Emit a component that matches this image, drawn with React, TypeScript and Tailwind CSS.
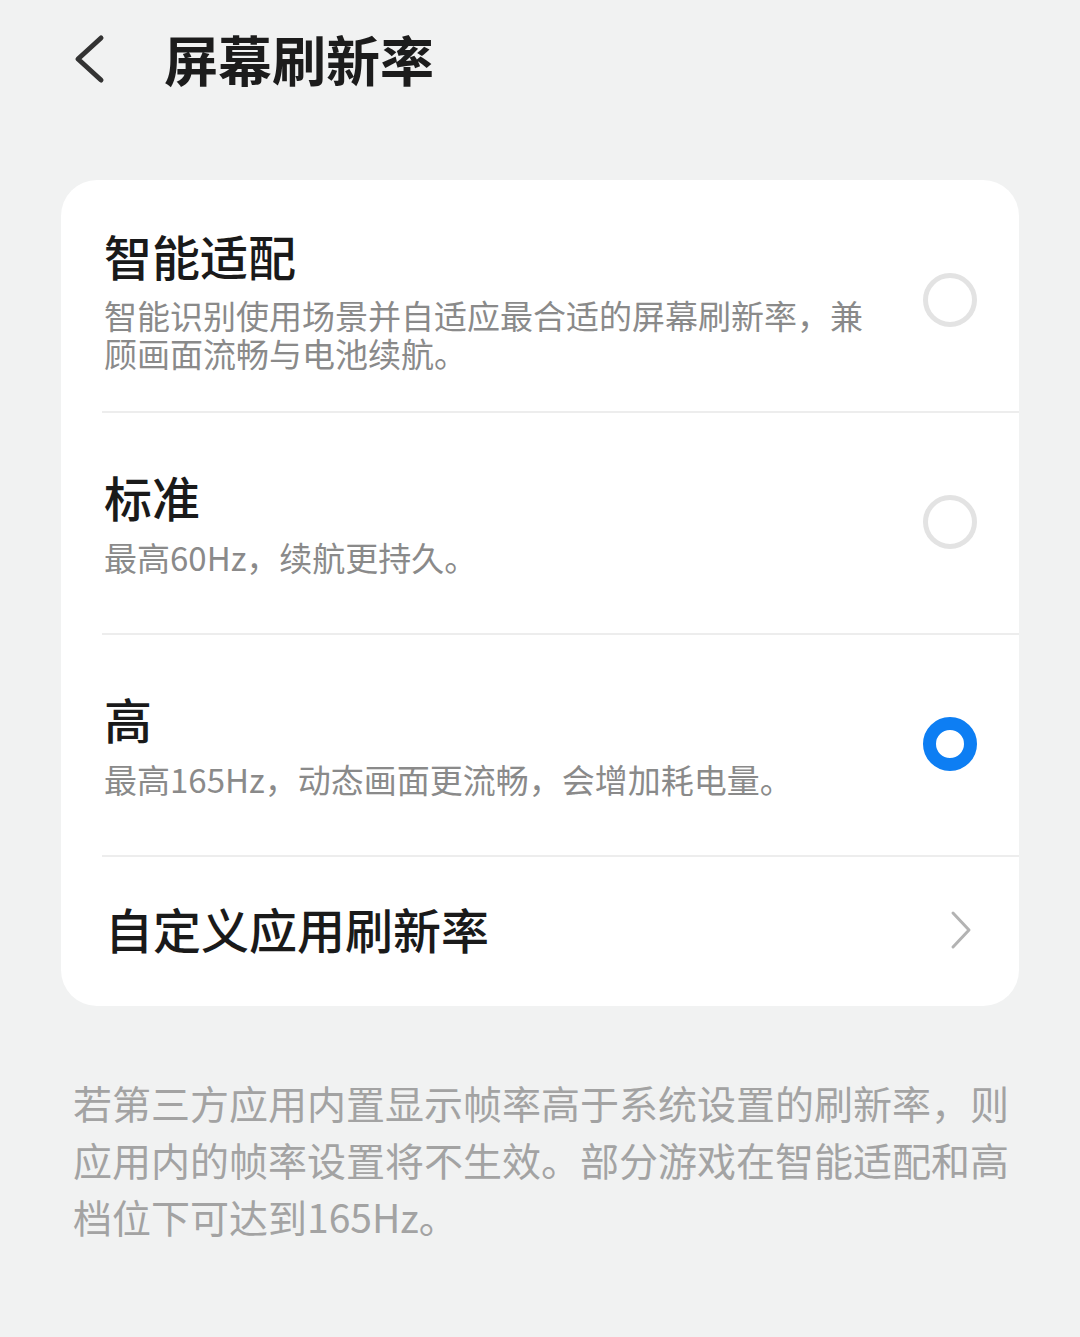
import React from "react";

const font = { fontFamily: '"Noto Sans CJK SC", "Noto Sans", sans-serif' };

type Option = {
  title: string;
  desc: string;
  selected: boolean;
  pad: string;
  gap: string;
};

const options: Option[] = [
  {
    title: "智能适配",
    desc: "智能识别使用场景并自适应最合适的屏幕刷新率，兼顾画面流畅与电池续航。",
    selected: false,
    pad: "pt-[47px] pb-[39px]",
    gap: "mt-[13px]",
  },
  {
    title: "标准",
    desc: "最高60Hz，续航更持久。",
    selected: false,
    pad: "pt-[55px] pb-[57px]",
    gap: "mt-[14px]",
  },
  {
    title: "高",
    desc: "最高165Hz，动态画面更流畅，会增加耗电量。",
    selected: true,
    pad: "pt-[55px] pb-[57px]",
    gap: "mt-[14px]",
  },
];

const Radio = ({ on }: { on: boolean }) =>
  on ? (
    <div className="w-[54px] h-[54px] rounded-full border-[13px] border-[#0d7ef3] shrink-0" />
  ) : (
    <div className="w-[54px] h-[54px] rounded-full border-[5px] border-[#e3e3e3] shrink-0" />
  );

const Divider = () => <div className="ml-[41px] h-[2px] bg-[#ededed]" />;

export default function App() {
  return (
    <div className="min-h-[1337px] w-full bg-[#f1f2f2]" style={font}>
      {/* header */}
      <div className="h-[118px] flex items-center pl-[72px]">
        <svg width="34" height="50" viewBox="0 0 34 50" className="shrink-0">
          <path
            d="M29 4 L6 25 L29 46"
            fill="none"
            stroke="#333333"
            strokeWidth="5"
            strokeLinecap="round"
            strokeLinejoin="round"
          />
        </svg>
        <h1 className="ml-[58px] text-[54px] leading-none font-bold text-[#1c1c1c]">
          屏幕刷新率
        </h1>
      </div>

      {/* options card */}
      <div className="mt-[62px] mx-[61px] bg-white rounded-[36px] overflow-hidden">
        {options.map((o) => (
          <div key={o.title}>
            <div className={`flex items-center pl-[43px] pr-[42px] ${o.pad}`}>
              <div className="flex-1">
                <div className="text-[48px] leading-[56px] font-medium text-[#1a1a1a]">
                  {o.title}
                </div>
                <div className={`${o.gap} max-w-[770px] text-[33px] leading-[38px] text-[#8a8a8a]`}>
                  {o.desc}
                </div>
              </div>
              <Radio on={o.selected} />
            </div>
            <Divider />
          </div>
        ))}
        <div className="h-[149px] flex items-center pl-[44px] pr-[46px]">
          <div className="flex-1 mb-[7px] text-[48px] leading-none font-medium text-[#1a1a1a]">
            自定义应用刷新率
          </div>
          <svg width="24" height="40" viewBox="0 0 24 40" className="mb-[3px]">
            <path
              d="M4 3 L20 20 L4 37"
              fill="none"
              stroke="#b3b3b3"
              strokeWidth="3"
              strokeLinecap="round"
              strokeLinejoin="round"
            />
          </svg>
        </div>
      </div>

      {/* footnote */}
      <p className="mt-[68px] pl-[73px] pr-[60px] text-[39px] leading-[57px] text-[#a3a3a3]">
        若第三方应用内置显示帧率高于系统设置的刷新率，则应用内的帧率设置将不生效。部分游戏在智能适配和高档位下可达到165Hz。
      </p>
    </div>
  );
}
